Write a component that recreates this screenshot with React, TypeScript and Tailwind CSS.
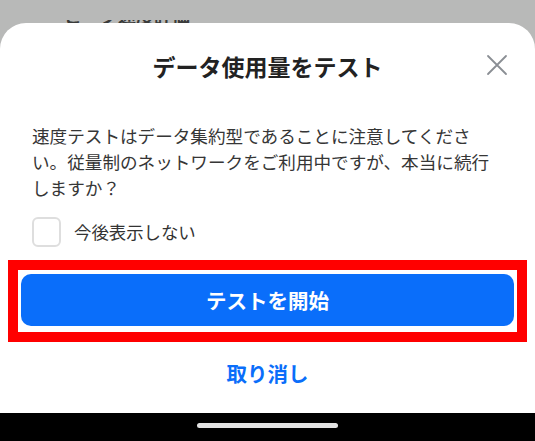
import React from 'react';

const jp = { fontFamily: '"Noto Sans CJK JP", "Noto Sans", sans-serif' };

function CloseIcon() {
  return (
    <svg width="22" height="22" viewBox="0 0 22 22" fill="none">
      <path d="M2 2L20 20M20 2L2 20" stroke="#8a8e94" strokeWidth="1.8" strokeLinecap="round" />
    </svg>
  );
}

export default function App() {
  return (
    <div className="w-[535px] h-[441px] flex flex-col bg-[#b8b9b8] overflow-hidden" style={jp}>
      {/* page behind the sheet */}
      <div className="h-[23px] shrink-0">
        <div className="mt-[20px] h-[3px] overflow-hidden pl-[64px]">
          <div className="-mt-[14px] text-[18px] leading-[18px] font-bold text-[#3a3b3a]">ピーク速度評価</div>
        </div>
      </div>

      {/* bottom sheet */}
      <div className="h-[390px] shrink-0 bg-white rounded-t-[26px] flex flex-col">
        <div className="grid grid-cols-[1fr_auto_1fr] items-center pt-[27px] px-[26px]">
          <div />
          <h2 className="text-[23px] leading-[32px] font-bold text-[#222]">データ使用量をテスト</h2>
          <div className="flex justify-end">
            <button className="-mt-[3px] mr-[1px]">
              <CloseIcon />
            </button>
          </div>
        </div>

        <p className="mt-[41px] px-[32px] text-[17.6px] leading-[26px] text-[#363636]">
          速度テストはデータ集約型であることに注意してください。従量制のネットワークをご利用中ですが、本当に続行しますか？
        </p>

        <label className="mt-[16px] px-[32px] flex items-center gap-[13px]">
          <span className="w-[29px] h-[30px] rounded-[6px] border-2 border-[#dedede] bg-white" />
          <span className="text-[17.4px] leading-[24px] text-[#333]">今後表示しない</span>
        </label>

        <div className="mt-[13px] mx-2 border-[10px] border-[#ff0000] px-[3px] pt-[4px] pb-[6px]">
          <button className="w-full h-[52px] rounded-[10px] bg-[#0a6efa] text-white text-[20.5px] font-bold leading-[28px]">
            テストを開始
          </button>
        </div>

        <button className="mt-[17px] self-center text-[20.5px] leading-[28px] font-bold text-[#0a6efa]">
          取り消し
        </button>
      </div>

      {/* system nav bar */}
      <div className="flex-1 bg-black flex justify-center pt-[10px]">
        <div className="w-[141px] h-[5px] rounded-full bg-[#e2e2e2]" />
      </div>
    </div>
  );
}
